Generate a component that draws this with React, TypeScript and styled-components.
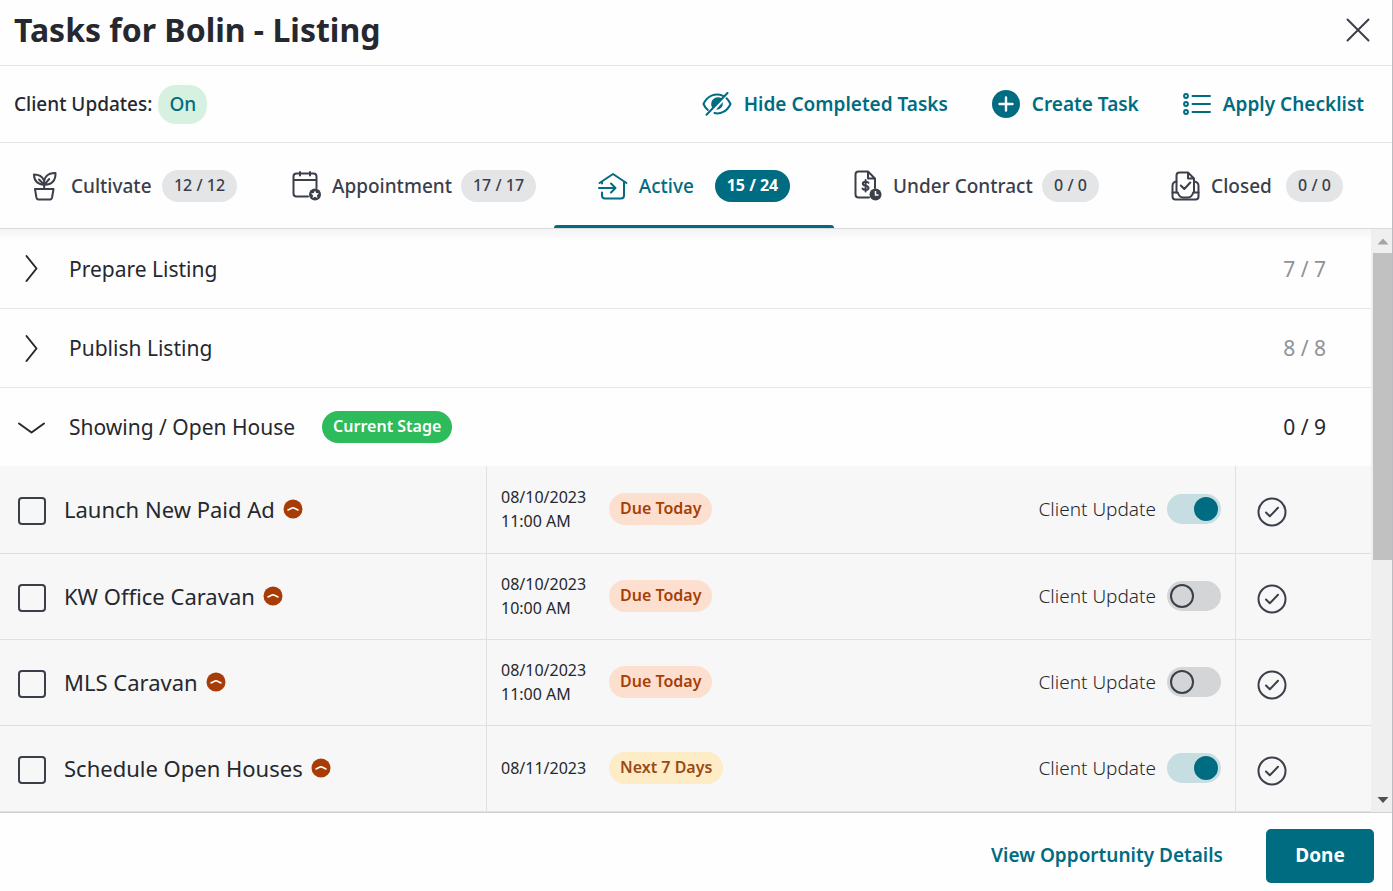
import React from 'react';
import styled, { createGlobalStyle, css } from 'styled-components';

const color = {
  ink: '#26282f',
  slate: '#3b3f4a',
  teal: '#006c82',
  line: '#e6e6e8',
  surface: '#fefefe',
  muted: '#8f9299',
};

const GlobalStyle = createGlobalStyle`
  *, *::before, *::after { box-sizing: border-box; }
  body { margin: 0; background: ${color.surface}; }
  body, button, input { font-family: 'Noto Sans', 'Open Sans', sans-serif; }
  h1, h2, h3, p, ul { margin: 0; padding: 0; }
  ul { list-style: none; }
  button { border: 0; padding: 0; background: none; color: inherit; cursor: pointer; }
`;

const Panel = styled.main`
  display: flex;
  flex-direction: column;
  height: 100vh;
  border-right: 1px solid #b9bcc0;
  background: ${color.surface};
  color: ${color.ink};
  overflow: hidden;
`;

const Header = styled.header`
  display: flex;
  align-items: center;
  justify-content: space-between;
  height: 66px;
  flex: none;
  padding: 0 21px 6px 14px;
  border-bottom: 1px solid ${color.line};
`;

const Title = styled.h1`
  font-size: 32px;
  line-height: 40px;
  font-weight: 700;
`;

const CloseButton = styled.button`
  display: flex;
  color: ${color.slate};
`;

const Toolbar = styled.div`
  display: flex;
  align-items: center;
  height: 77px;
  flex: none;
  padding: 0 28px 0 14px;
  border-bottom: 1px solid ${color.line};
  font-size: 19px;
  line-height: 24px;
  font-weight: 500;
`;

const OnPill = styled.span`
  margin-left: 6px;
  padding: 7px 11px;
  border-radius: 18px;
  background: #d7f1e0;
  color: ${color.teal};
  line-height: 25px;
`;

const Actions = styled.div`
  display: flex;
  align-items: center;
  gap: 44px;
  margin-left: auto;
`;

const ActionButton = styled.button`
  display: flex;
  align-items: center;
  gap: 12px;
  color: ${color.teal};
  font-size: 19px;
  line-height: 24px;
  font-weight: 600;
`;

const Tabs = styled.nav`
  display: grid;
  grid-template-columns: repeat(5, 1fr);
  flex: none;
  height: 86px;
  margin: 0 -2px 0 -6px;
  border-bottom: 1px solid #d9dadd;
`;

const Tab = styled.button<{ $active?: boolean }>`
  position: relative;
  display: flex;
  align-items: center;
  justify-content: center;
  color: ${(p) => (p.$active ? color.teal : color.slate)};
  font-size: 19px;
  line-height: 24px;
  font-weight: 500;
  ${(p) =>
    p.$active &&
    css`
      &::after {
        content: '';
        position: absolute;
        inset: auto 0 0;
        height: 3px;
        border-radius: 3px 3px 0 0;
        background: ${color.teal};
      }
    `}
`;

const TabLabel = styled.span<{ $width: number }>`
  width: ${(p) => p.$width}px;
  margin-left: 11px;
  text-align: left;
  white-space: nowrap;
`;

const Count = styled.span<{ $active?: boolean }>`
  padding: 0 12px 2px;
  border-radius: 16px;
  background: ${(p) => (p.$active ? color.teal : '#e4e5e7')};
  color: ${(p) => (p.$active ? '#fff' : color.slate)};
  font-size: 16px;
  line-height: 30px;
  font-weight: ${(p) => (p.$active ? 700 : 500)};
  white-space: nowrap;
`;

const Body = styled.div`
  display: flex;
  flex: 1;
  min-height: 0;
`;

const Stages = styled.div`
  flex: 1;
  min-width: 0;
  overflow-y: auto;
  scrollbar-width: none;
  background: linear-gradient(#f4f4f5, ${color.surface}) top / 100% 12px no-repeat;
`;

const StageRow = styled.button`
  display: flex;
  align-items: center;
  width: 100%;
  height: 79px;
  padding: 0 45px 0 17px;
  font-size: 21px;
  line-height: 28px;
  text-align: left;

  & + & { border-top: 1px solid ${color.line}; }
`;

const StageName = styled.span`
  margin-left: 23px;
`;

const StagePill = styled.span`
  margin-left: 27px;
  padding: 0 11px 2px;
  border-radius: 16px;
  background: #2dbb5b;
  color: #fff;
  font-size: 16px;
  line-height: 30px;
  font-weight: 600;
`;

const StageCount = styled.span<{ $done: boolean }>`
  margin-left: auto;
  color: ${(p) => (p.$done ? color.muted : color.ink)};
`;

const TaskList = styled.ul`
  background: #f7f7f7;
`;

const TaskRow = styled.li`
  display: grid;
  grid-template-columns: 486fr 749fr 136px;
  height: 86px;
  border-bottom: 1px solid #dfe0e2;

  &:first-child { height: 88px; }
`;

const Cell = styled.div`
  display: flex;
  align-items: center;
  padding-bottom: 2px;
  & + & { border-left: 1px solid #dfe0e2; }
`;

const NameCell = styled(Cell)`
  padding-left: 18px;
`;

const TaskName = styled.label`
  display: flex;
  align-items: center;
  gap: 18px;
  font-size: 22px;
  line-height: 28px;
`;

const Checkbox = styled.input`
  appearance: none;
  width: 28px;
  height: 28px;
  margin: 4px 0 0;
  border: 2px solid ${color.slate};
  border-radius: 4px;
`;

const PriorityMark = styled.svg`
  margin-left: 8px;
  flex: none;
`;

const InfoCell = styled(Cell)`
  padding-left: 14px;
  padding-right: 14px;
  border-left: 1px solid #dfe0e2;
`;

const When = styled.div`
  width: 108px;
  font-size: 16px;
  line-height: 24px;
`;

const Due = styled.span<{ $soon: boolean }>`
  padding: 0 11px 2px;
  border-radius: 16px;
  background: ${(p) => (p.$soon ? '#feecc6' : '#fddfd0')};
  color: ${(p) => (p.$soon ? '#9a4a12' : '#a63f06')};
  font-size: 16px;
  line-height: 30px;
  font-weight: 600;
`;

const SwitchLabel = styled.label`
  display: flex;
  align-items: center;
  gap: 11px;
  margin-left: auto;
  font-size: 19px;
  line-height: 24px;
  font-weight: 300;
`;

const Switch = styled.input`
  appearance: none;
  display: flex;
  align-items: center;
  width: 54px;
  height: 30px;
  margin: 0;
  padding: 3px;
  border-radius: 15px;
  background: #d4d5d7;

  &::before {
    content: '';
    box-sizing: border-box;
    width: 24px;
    height: 24px;
    border: 2px solid ${color.slate};
    border-radius: 50%;
  }
  &:checked { background: #c6dde1; justify-content: flex-end; }
  &:checked::before { background: ${color.teal}; border-color: ${color.teal}; }
`;

const CompleteCell = styled(Cell)`
  padding-left: 21px;
  padding-top: 7px;
  color: ${color.slate};
`;

const IconButton = styled.button`
  display: flex;
`;

const ScrollTrack = styled.div`
  display: flex;
  flex-direction: column;
  align-items: center;
  flex: none;
  width: 21px;
  padding-left: 2px;
  background: #efefef;
`;

const ScrollArrow = styled.svg`
  flex: none;
`;

const ScrollThumb = styled.div`
  width: 100%;
  flex: 0 1 307px;
  margin-bottom: auto;
  background: #c1c1c1;
`;

const Footer = styled.footer`
  display: flex;
  align-items: center;
  justify-content: flex-end;
  gap: 43px;
  flex: none;
  height: 79px;
  padding: 8px 18px 0 14px;
  border-top: 1px solid #d0d1d4;
`;

const DetailsLink = styled.a`
  padding-bottom: 2px;
  color: ${color.teal};
  font-size: 19px;
  line-height: 24px;
  font-weight: 600;
  text-decoration: none;
`;

const DoneButton = styled.button`
  width: 108px;
  height: 54px;
  padding-bottom: 2px;
  border-radius: 5px;
  background: ${color.teal};
  color: #fff;
  font-size: 19px;
  font-weight: 700;
`;

const line = { fill: 'none', stroke: 'currentColor', strokeLinecap: 'round', strokeLinejoin: 'round' } as const;

const EyeOffIcon = () => (
  <svg width="30" height="24" viewBox="0 0 30 24" aria-hidden="true">
    <g {...line} strokeWidth="2">
      <path d="M21 3.800C13 .2 5 4.400 1.500 12c1 2.400 2.400 4.400 4.300 5.900" />
      <path d="M24.500 6.300c1.700 1.500 3 3.400 4 5.700C25 19.600 18 22.600 12.500 21" />
      <path d="M25.500 1L4.500 22.800" />
    </g>
    <path d="M20 6.500C15 3.300 9 6.800 9.200 12.400c.1 1.700.6 2.700 1.300 3.600z" fill="currentColor" />
    <path d="M20.700 10.200c.8 4.400-2.600 7.700-6.600 7.300z" fill="currentColor" />
  </svg>
);

const PlusIcon = () => (
  <svg width="28" height="28" viewBox="0 0 28 28" aria-hidden="true">
    <circle cx="14" cy="14" r="14" fill="currentColor" />
    <path d="M14 7.500v13M7.500 14h13" stroke="#fff" strokeWidth="2.400" strokeLinecap="round" />
  </svg>
);

const ChecklistIcon = () => (
  <svg width="28" height="24" viewBox="0 0 28 24" aria-hidden="true">
    <g {...line} strokeWidth="2">
      <circle cx="3" cy="4" r="1.900" />
      <circle cx="3" cy="12" r="1.900" />
      <circle cx="3" cy="20" r="1.900" />
      <path d="M9.500 4H27M9.500 12H27M9.500 20H27" />
    </g>
  </svg>
);

const PlantIcon = () => (
  <svg width="29" height="30" viewBox="0 0 29 30" aria-hidden="true">
    <g {...line} strokeWidth="2">
      <path d="M4 18h18.500l-1.400 8.500c-.3 1.400-1 1.900-2 1.900H7.400c-1 0-1.700-.5-2-1.900z" />
      <path d="M13.200 18v-4.200M13.200 13.800C6.500 13.300 3 9.500 3 3.500c4.500 0 8.200 1.700 9.700 5.500" />
      <path d="M13.200 13.800C12.200 6.500 16.500 1.800 24.500 2c.3 7.500-3.800 12-11.300 11.800zM8 8.500l5.200 5.300 5-5.800" />
    </g>
  </svg>
);

const CalendarIcon = () => (
  <svg width="29" height="31" viewBox="0 0 29 31" aria-hidden="true">
    <g {...line} strokeWidth="2">
      <path d="M16 26.500H4.500C2.500 26.500 1.500 25.500 1.500 23.500V6.500C1.500 4.500 2.500 3.500 4.500 3.500h17c2 0 3 1 3 3V18M1.500 10h23M8 2v3.500M18 2v3.500" />
    </g>
    <circle cx="23" cy="24.500" r="6" fill="currentColor" />
    <path d="M23 20.500l1.200 2.600 2.800.3-2.100 1.900.6 2.800-2.500-1.400-2.500 1.400.6-2.800-2.100-1.900 2.800-.3z" fill="#fff" />
  </svg>
);

const HouseIcon = () => (
  <svg width="30" height="28" viewBox="0 0 30 28" aria-hidden="true">
    <g {...line} strokeWidth="2">
      <path d="M1.500 11L15 2l13.500 9M4 9.500v2M4 20.500v3c0 2 1 3 3 3h16c2 0 3-1 3-3V9.500" />
      <path d="M1 16h16M13 11.500l4.500 4.500-4.500 4.500" />
    </g>
  </svg>
);

const ContractIcon = () => (
  <svg width="33" height="31" viewBox="-5 0 33 31" aria-hidden="true">
    <g {...line} strokeWidth="2">
      <path d="M15 27.500H4.500c-2 0-3-1-3-3V4.500c0-2 1-3 3-3H14l7 7V18M14 1.500v7h7" />
      <path d="M14.500 12.800c-.8-1.400-5.500-1.700-5.700.8-.2 2.800 5.700 1.500 5.700 4.300 0 2.500-5 2.400-6 .6M11.600 10v11.500" />
    </g>
    <circle cx="21.500" cy="24.500" r="6" fill="currentColor" />
    <path d="M21.500 21v4h3" fill="none" stroke="#fff" strokeWidth="1.500" />
  </svg>
);

const InboxIcon = () => (
  <svg width="35" height="30" viewBox="-6 0 35 30" aria-hidden="true">
    <g {...line} strokeWidth="2">
      <path d="M5.500 21.500V4.500c0-2 1-3 3-3H17l6 6v14M17 1.500v6h6M9.800 14.500l3.500 3.500 6-6.500" />
      <path d="M5.500 10.500c-2.700.3-4 2-4 4.500v10.500c0 2 1 3 3 3h20c2 0 3-1 3-3V15c0-2.500-1.500-4.200-4.500-4.500" />
      <path d="M1.500 21.500h5.300c1 3.300 3 5 5.200 5h5c2.200 0 4.200-1.700 5.200-5h5.300" />
    </g>
  </svg>
);

const Chevron = ({ open }: { open: boolean }) => (
  <svg width="29" height="29" viewBox="0 0 29 29" aria-hidden="true">
    <path {...line} strokeWidth="2" d={open ? 'M2 10.500l12.500 9 12.500-9' : 'M9.500 2l10 12.500-10 12.500'} />
  </svg>
);

type TabItem = { label: string; width: number; count: string; icon: React.ReactNode; active?: boolean };

const tabs: TabItem[] = [
  { label: 'Cultivate', width: 91, count: '12 / 12', icon: <PlantIcon /> },
  { label: 'Appointment', width: 129, count: '17 / 17', icon: <CalendarIcon /> },
  { label: 'Active', width: 76, count: '15 / 24', icon: <HouseIcon />, active: true },
  { label: 'Under Contract', width: 149, count: '0 / 0', icon: <ContractIcon /> },
  { label: 'Closed', width: 75, count: '0 / 0', icon: <InboxIcon /> },
];

const stages = [
  { name: 'Prepare Listing', count: '7 / 7', open: false },
  { name: 'Publish Listing', count: '8 / 8', open: false },
  { name: 'Showing / Open House', count: '0 / 9', open: true },
];

const tasks = [
  { name: 'Launch New Paid Ad', date: '08/10/2023', time: '11:00 AM', due: 'Due Today', soon: false, update: true },
  { name: 'KW Office Caravan', date: '08/10/2023', time: '10:00 AM', due: 'Due Today', soon: false, update: false },
  { name: 'MLS Caravan', date: '08/10/2023', time: '11:00 AM', due: 'Due Today', soon: false, update: false },
  { name: 'Schedule Open Houses', date: '08/11/2023', time: '', due: 'Next 7 Days', soon: true, update: true },
];

export default function App() {
  return (
    <Panel>
      <GlobalStyle />
      <Header>
        <Title>Tasks for Bolin - Listing</Title>
        <CloseButton type="button" aria-label="Close">
          <svg width="26" height="26" viewBox="0 0 26 26" aria-hidden="true">
            <path {...line} strokeWidth="2" d="M2.500 2.500l21 21M23.500 2.500l-21 21" />
          </svg>
        </CloseButton>
      </Header>

      <Toolbar>
        <span>Client Updates:</span>
        <OnPill>On</OnPill>
        <Actions>
          <ActionButton type="button"><EyeOffIcon />Hide Completed Tasks</ActionButton>
          <ActionButton type="button"><PlusIcon />Create Task</ActionButton>
          <ActionButton type="button"><ChecklistIcon />Apply Checklist</ActionButton>
        </Actions>
      </Toolbar>

      <Tabs>
        {tabs.map((t) => (
          <Tab key={t.label} type="button" $active={t.active}>
            {t.icon}
            <TabLabel $width={t.width}>{t.label}</TabLabel>
            <Count $active={t.active}>{t.count}</Count>
          </Tab>
        ))}
      </Tabs>

      <Body>
        <Stages>
          {stages.map((s) => (
            <StageRow key={s.name} type="button" aria-expanded={s.open}>
              <Chevron open={s.open} />
              <StageName>{s.name}</StageName>
              {s.open && <StagePill>Current Stage</StagePill>}
              <StageCount $done={!s.open}>{s.count}</StageCount>
            </StageRow>
          ))}
          <TaskList>
            {tasks.map((t) => (
              <TaskRow key={t.name}>
                <NameCell>
                  <TaskName>
                    <Checkbox type="checkbox" />
                    {t.name}
                  </TaskName>
                  <PriorityMark width="20" height="20" viewBox="0 0 20 20" aria-hidden="true">
                    <circle cx="10" cy="10" r="9.500" fill="#a83c06" />
                    <path d="M5 11l4-1.900q1-.4 2 0l4 1.900" fill="none" stroke="#fff" strokeWidth="1.600" strokeLinecap="round" />
                  </PriorityMark>
                </NameCell>
                <InfoCell>
                  <When>
                    <p>{t.date}</p>
                    {t.time && <p>{t.time}</p>}
                  </When>
                  <Due $soon={t.soon}>{t.due}</Due>
                  <SwitchLabel>
                    Client Update
                    <Switch type="checkbox" role="switch" defaultChecked={t.update} />
                  </SwitchLabel>
                </InfoCell>
                <CompleteCell>
                  <IconButton type="button" aria-label={`Complete ${t.name}`}>
                    <svg width="30" height="30" viewBox="0 0 30 30" aria-hidden="true">
                      <circle {...line} strokeWidth="2" cx="15" cy="15" r="13.500" />
                      <path {...line} strokeWidth="2" d="M9 15.500l3.800 3.800 8.200-8.500" />
                    </svg>
                  </IconButton>
                </CompleteCell>
              </TaskRow>
            ))}
          </TaskList>
        </Stages>
        <ScrollTrack aria-hidden="true">
          <ScrollArrow width="19" height="24" viewBox="0 0 19 24">
            <path d="M4.500 15.500l5.500-6 5.500 6z" fill="#a3a4a8" />
          </ScrollArrow>
          <ScrollThumb />
          <ScrollArrow width="19" height="24" viewBox="0 0 19 24">
            <path d="M4.500 9l5.500 6 5.500-6z" fill="#505154" />
          </ScrollArrow>
        </ScrollTrack>
      </Body>

      <Footer>
        <DetailsLink href="#details">View Opportunity Details</DetailsLink>
        <DoneButton type="button">Done</DoneButton>
      </Footer>
    </Panel>
  );
}
